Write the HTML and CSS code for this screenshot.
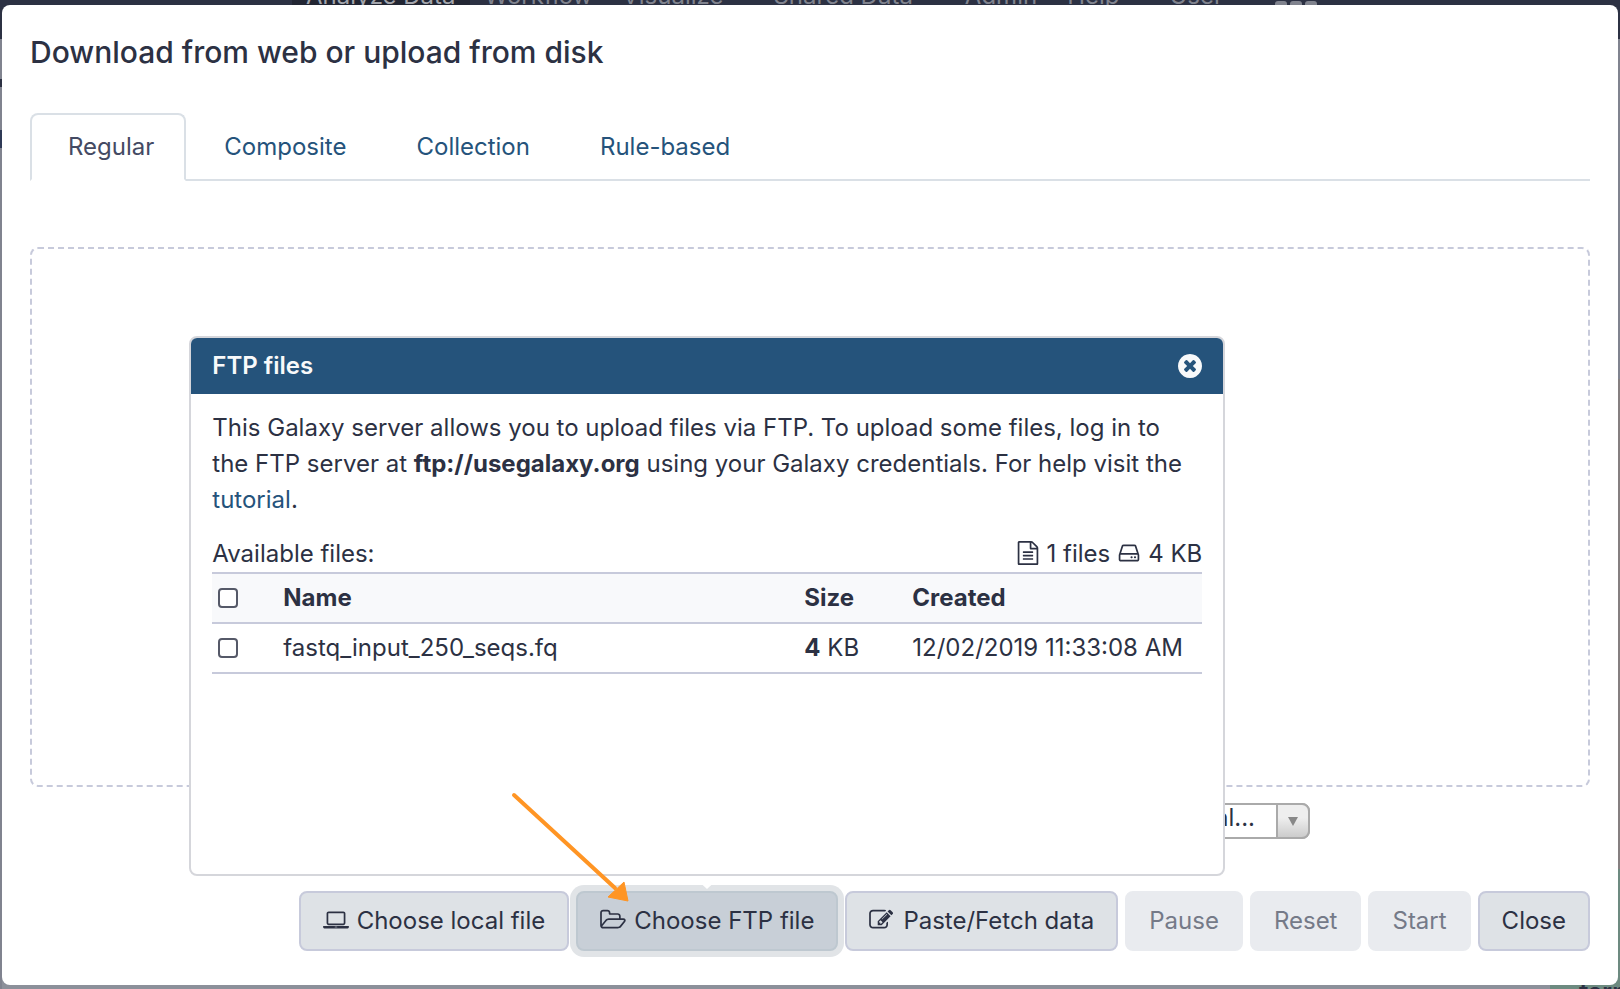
FILE: index.html
```html
<!DOCTYPE html>
<html lang="en">
<head>
<meta charset="utf-8">
<title>Galaxy</title>
<link rel="stylesheet" href="styles.css">
</head>
<body>
<div class="page" aria-hidden="true">
  <nav class="masthead">
    <span class="item active">Analyze Data</span><span class="item workflow">Workflow</span><span class="item visualize">Visualize</span><span class="item shared">Shared Data</span><span class="item admin">Admin</span><span class="item help">Help</span><span class="item user">User</span><span class="grid-dots"><i></i><i></i><i></i></span>
  </nav>
  <div class="columns">
    <div class="tools"><div class="tools-title"></div><div class="tools-search"></div></div>
    <div class="center"></div>
    <div class="history">
      <div class="history-head"></div>
      <div class="history-info"></div>
      <div class="dataset"><span>format</span></div>
    </div>
  </div>
</div>
<main class="modal" role="dialog" aria-labelledby="title">
  <h1 class="title" id="title">Download from web or upload from disk</h1>
  <nav class="tabs">
    <a class="tab selected" href="#regular">Regular</a>
    <a class="tab" href="#composite">Composite</a>
    <a class="tab" href="#collection">Collection</a>
    <a class="tab" href="#rules">Rule-based</a>
  </nav>
  <section class="dropzone" id="regular"></section>
  <div class="options">
    <div class="picker">
      <select class="genome" aria-label="Genome"><option>----- Additional...</option></select>
      <span class="picker-arrow"></span>
    </div>
  </div>
  <footer class="actions">
    <button class="btn" type="button"><svg class="icon wide" viewBox="0 0 1920 1792"><path d="M416 1280q-66 0-113-47t-47-113v-704q0-66 47-113t113-47h1088q66 0 113 47t47 113v704q0 66-47 113t-113 47h-1088zm-32-864v704q0 13 9.500 22.500t22.500 9.500h1088q13 0 22.500-9.500t9.500-22.500v-704q0-13-9.500-22.500t-22.500-9.500h-1088q-13 0-22.500 9.500t-9.500 22.500zm1376 928h160v96q0 40-47 68t-113 28h-1600q-66 0-113-28t-47-68v-96h1760zm-720 96q16 0 16-16t-16-16h-160q-16 0-16 16t16 16h160z"/></svg>Choose local file</button>
    <div class="ftp">
      <button class="btn pressed" type="button"><svg class="icon wide" viewBox="64 0 1920 1792"><path d="M1845 931q0-35-53-35h-1088q-40 0-85.500 21.500t-71.500 52.500l-294 363q-18 24-18 40 0 35 53 35h1088q40 0 86-22t71-53l294-363q18-22 18-39zm-1141-163h768v-160q0-40-28-68t-68-28h-576q-40 0-68-28t-28-68v-64q0-40-28-68t-68-28h-320q-40 0-68 28t-28 68v853l256-315q44-53 116-87.500t140-34.500zm1269 163q0 62-46 120l-295 363q-43 53-116 87.500t-140 34.500h-1088q-92 0-158-66t-66-158v-960q0-92 66-158t158-66h320q92 0 158 66t66 158v32h544q92 0 158 66t66 158v160h192q54 0 99 24.500t67 70.500q15 32 15 68z"/></svg>Choose FTP file</button>
      <section class="popover">
        <header class="popover-head">
          <h2>FTP files</h2>
          <button class="dismiss" type="button" aria-label="Close FTP files"><svg viewBox="128 128 1536 1536"><path d="M1277 1122q0-26-19-45l-181-181 181-181q19-19 19-45 0-27-19-46l-90-90q-19-19-46-19-26 0-45 19l-181 181-181-181q-19-19-45-19-27 0-46 19l-90 90q-19 19-19 46 0 26 19 45l181 181-181 181q-19 19-19 45 0 27 19 46l90 90q19 19 46 19 26 0 45-19l181-181 181 181q19 19 45 19 27 0 46-19l90-90q19-19 19-46zm387-226q0 209-103 385.500t-279.500 279.500-385.500 103-385.500-103-279.500-279.500-103-385.500 103-385.500 279.500-279.500 385.500-103 385.500 103 279.500 279.500 103 385.500z"/></svg></button>
        </header>
        <div class="popover-body">
          <p>This Galaxy server allows you to upload files via FTP. To upload some files, log in to the FTP server at <strong>ftp://usegalaxy.org</strong> using your Galaxy credentials. For help visit the <a href="#tutorial">tutorial</a>.</p>
          <div class="summary">
            <span>Available files:</span>
            <span class="totals"><svg class="icon file" viewBox="128 0 1536 1792"><path d="M1596 380q28 28 48 76t20 88v1152q0 40-28 68t-68 28h-1344q-40 0-68-28t-28-68v-1600q0-40 28-68t68-28h896q40 0 88 20t76 48zm-444-244v376h376q-10-29-22-41l-313-313q-12-12-41-22zm384 1528v-1024h-416q-40 0-68-28t-28-68v-416h-768v1536h1280zm-1024-864q0-14 9-23t23-9h704q14 0 23 9t9 23v64q0 14-9 23t-23 9h-704q-14 0-23-9t-9-23v-64zm736 224q14 0 23 9t9 23v64q0 14-9 23t-23 9h-704q-14 0-23-9t-9-23v-64q0-14 9-23t23-9h704zm0 256q14 0 23 9t9 23v64q0 14-9 23t-23 9h-704q-14 0-23-9t-9-23v-64q0-14 9-23t23-9h704z"/></svg>1 files<svg class="icon disk" viewBox="128 0 1536 1792"><path d="M1168 1216q0 33-23.500 56.500t-56.500 23.500-56.500-23.500-23.500-56.500 23.500-56.500 56.500-23.500 56.500 23.500 23.500 56.500zm256 0q0 33-23.500 56.500t-56.500 23.500-56.500-23.500-23.500-56.500 23.500-56.500 56.500-23.500 56.500 23.500 23.500 56.500zm112 160v-320q0-13-9.500-22.500t-22.500-9.500h-1216q-13 0-22.500 9.500t-9.500 22.500v320q0 13 9.500 22.500t22.500 9.500h1216q13 0 22.500-9.500t9.500-22.500zm-1230-480h1180l-157-482q-4-13-16-21.500t-26-8.500h-782q-14 0-26 8.500t-16 21.500zm1358 160v320q0 66-47 113t-113 47h-1216q-66 0-113-47t-47-113v-320q0-25 16-75l197-606q17-53 63-86t101-33h782q55 0 101 33t63 86l197 606q16 50 16 75z"/></svg>4 KB</span>
          </div>
          <table class="files">
            <thead><tr><th class="pick"><input type="checkbox" aria-label="Select all files"></th><th>Name</th><th class="size">Size</th><th class="created">Created</th></tr></thead>
            <tbody><tr><td class="pick"><input type="checkbox" aria-label="Select fastq_input_250_seqs.fq"></td><td>fastq_input_250_seqs.fq</td><td class="size"><strong>4</strong> KB</td><td class="created">12/02/2019 11:33:08 AM</td></tr></tbody>
          </table>
        </div>
        <span class="pointer"></span>
      </section>
      <svg class="callout" viewBox="0 0 122 112"><path class="shaft" d="M4 4L105 97"/><path class="head" d="M114 91L118 110L98 106Z"/></svg>
    </div>
    <button class="btn" type="button"><svg class="icon wide" viewBox="0 0 1920 1792"><path d="M888 1184l116-116-152-152-116 116v56h96v96h56zm440-720q-16-16-33 1l-350 350q-17 17-1 33t33-1l350-350q17-17 1-33zm80 594v190q0 119-84.500 203.500t-203.500 84.500h-832q-119 0-203.500-84.500t-84.500-203.500v-832q0-119 84.500-203.500t203.500-84.500h832q63 0 117 25 15 7 18 23 3 17-9 29l-49 49q-14 14-32 8-23-6-45-6h-832q-66 0-113 47t-47 113v832q0 66 47 113t113 47h832q66 0 113-47t47-113v-126q0-13 9-22l64-64q15-15 35-7t20 29zm-96-738l288 288-672 672h-288v-288zm444 132l-92 92-288-288 92-92q28-28 68-28t68 28l152 152q28 28 28 68t-28 68z"/></svg>Paste/Fetch data</button>
    <button class="btn" type="button" disabled>Pause</button>
    <button class="btn" type="button" disabled>Reset</button>
    <button class="btn" type="button" disabled>Start</button>
    <button class="btn" type="button">Close</button>
  </footer>
</main>
</body>
</html>
```

FILE: styles.css
```css
* { box-sizing: border-box; }

body {
  margin: 0;
  background: #868b98;
  color: #2c3143;
  font: 24px/36px Inter, "Liberation Sans", sans-serif;
}

a { color: #25537b; text-decoration: none; }

/* Dimmed application behind the dialog */
.page {
  position: absolute;
  inset: 0;
  overflow: hidden;
  display: flex;
  flex-direction: column;
}
.masthead {
  display: flex;
  align-items: center;
  flex: none;
  height: 86px;
  margin-top: -47px;
  padding-left: 292px;
  background: #2c3143;
  color: #80838e;
}
.item { margin-right: 30px; white-space: nowrap; }
.active {
  align-self: stretch;
  margin-right: 15px;
  padding: 25px 14px;
  background: #222633;
  color: #a3a5ac;
}
.visualize { margin-right: 50px; }
.shared { margin-right: 52px; }
.user { margin-right: 52px; }
.help { margin-right: 50px; }
.grid-dots { display: flex; gap: 3px; padding-top: 18px; }
.grid-dots i { width: 12px; height: 8px; border-radius: 3px; background: #80838e; }
.columns { display: flex; flex: 1; }
.tools { width: 2px; padding-top: 40px; background: #80838f; }
.tools-title { height: 8px; background: #2c3143; }
.tools-search { height: 18px; margin-top: 43px; background: #2f3a56; }
.center { flex: 1; background: #8c909a; }
.history { display: flex; flex-direction: column; width: 70px; background: #80838f; }
.history-head { flex: 34; }
.history-info { flex: 49; background: #857f80; }
.dataset {
  display: flex;
  align-items: flex-end;
  flex: 12;
  padding-left: 29px;
  background: #6d8a80;
  font-weight: 600;
}
.dataset span { margin-bottom: -21px; }

/* Dialog */
.modal {
  position: relative;
  display: flex;
  flex-direction: column;
  min-height: calc(100vh - 9px);
  margin: 5px 2px 4px;
  padding: 27px 28px 34px;
  border-radius: 8px;
  background: #fff;
}
.title { margin: 0 0 41px; font-size: 30px; font-weight: 500; line-height: 40px; }

.tabs { display: flex; height: 68px; border-bottom: 2px solid #dae0e6; }
.tab {
  height: 68px;
  padding: 14px 30px 14px 36px;
  border: 2px solid transparent;
  border-radius: 8px 8px 0 0;
}
.selected {
  border-color: #dae0e6;
  border-bottom-color: #fff;
  background: #fff;
  color: #444a63;
}

.dropzone {
  flex: 1;
  margin-top: 66px;
  border: 2px dashed #c7cadb;
  border-radius: 8px;
}

.options { display: flex; justify-content: flex-end; padding: 16px 280px 52px 0; }
.picker { position: relative; width: 320px; height: 36px; }
.genome {
  display: block;
  width: 100%;
  height: 36px;
  padding: 0 53px 6px 8px;
  border: 2px solid #aaa;
  border-radius: 8px;
  appearance: none;
  background: #fff;
  color: inherit;
  font: inherit;
  line-height: 26px;
  text-align-last: right;
}
.picker-arrow {
  position: absolute;
  inset: 0 0 0 auto;
  display: grid;
  place-items: center;
  width: 34px;
  border: 2px solid #aaa;
  border-radius: 0 8px 8px 0;
  background: linear-gradient(#eee 40%, #ccc);
  pointer-events: none;
}
.picker-arrow::after {
  content: "";
  border: solid transparent;
  border-width: 9px 5px 0;
  border-top-color: #888;
}

.actions { display: flex; justify-content: flex-end; gap: 7px; }
.btn {
  height: 60px;
  padding: 0 22px;
  border: 2px solid #c7cadb;
  border-radius: 8px;
  background: #dee2e6;
  color: #2c3143;
  font: inherit;
  white-space: nowrap;
}
.btn:disabled { border-color: #e9ebef; background: #e9ebef; color: #757a88; }
.pressed {
  border-color: #bec8d0;
  background: #c8cfd7;
  box-shadow: 0 0 0 6px #e1e4e7;
}
.icon { height: 24px; margin-right: 8px; vertical-align: -3px; fill: currentColor; }
.wide { width: 26px; }

/* FTP popover */
.ftp { position: relative; }
.popover {
  position: absolute;
  bottom: calc(100% + 15px);
  left: 50%;
  width: 1036px;
  min-height: 540px;
  margin-left: -518px;
  border: 2px solid #d5d6db;
  border-radius: 8px;
  background: #fff;
}
.popover-head {
  display: flex;
  align-items: center;
  justify-content: space-between;
  height: 56px;
  padding: 0 21px;
  border-radius: 6px 6px 0 0;
  background: #25537b;
  color: #f8f9fa;
}
.popover-head h2 { margin: 0; font-size: 24px; font-weight: 600; }
.dismiss { display: flex; padding: 0; border: 0; background: none; }
.dismiss svg { width: 24px; height: 24px; fill: #f8f9fa; }
.popover-body { padding: 16px 21px; }
.popover-body p { margin: 0 0 18px; padding-right: 8px; }
.summary { display: flex; justify-content: space-between; }
.file { width: 22px; }
.disk { width: 22px; margin-left: 8px; }
.files { width: 100%; border-collapse: collapse; }
.files tr { height: 50px; border: solid #c7cadb; border-width: 2px 0; }
.files thead { background: #f8f9fb; }
.files th, .files td { padding: 0; text-align: left; }
.files th { font-weight: 700; }
.files .pick { width: 71px; padding-left: 6px; }
.files .size { width: 108px; }
.files .created { width: 290px; white-space: nowrap; }
.files input {
  display: block;
  width: 20px;
  height: 20px;
  margin: 0;
  border: 2px solid #555968;
  border-radius: 4px;
  appearance: none;
  background: #fff;
}
.pointer {
  position: absolute;
  top: calc(100% + 2px);
  left: 50%;
  margin-left: -14px;
  border: solid transparent;
  border-width: 13px 14px 0;
  border-top-color: #fff;
}

.callout { position: absolute; top: -100px; left: -66px; width: 122px; height: 112px; }
.shaft { fill: none; stroke: #ff9524; stroke-width: 4; stroke-linecap: round; }
.head { fill: #ff9524; stroke: #ff9524; stroke-width: 1; }
```
